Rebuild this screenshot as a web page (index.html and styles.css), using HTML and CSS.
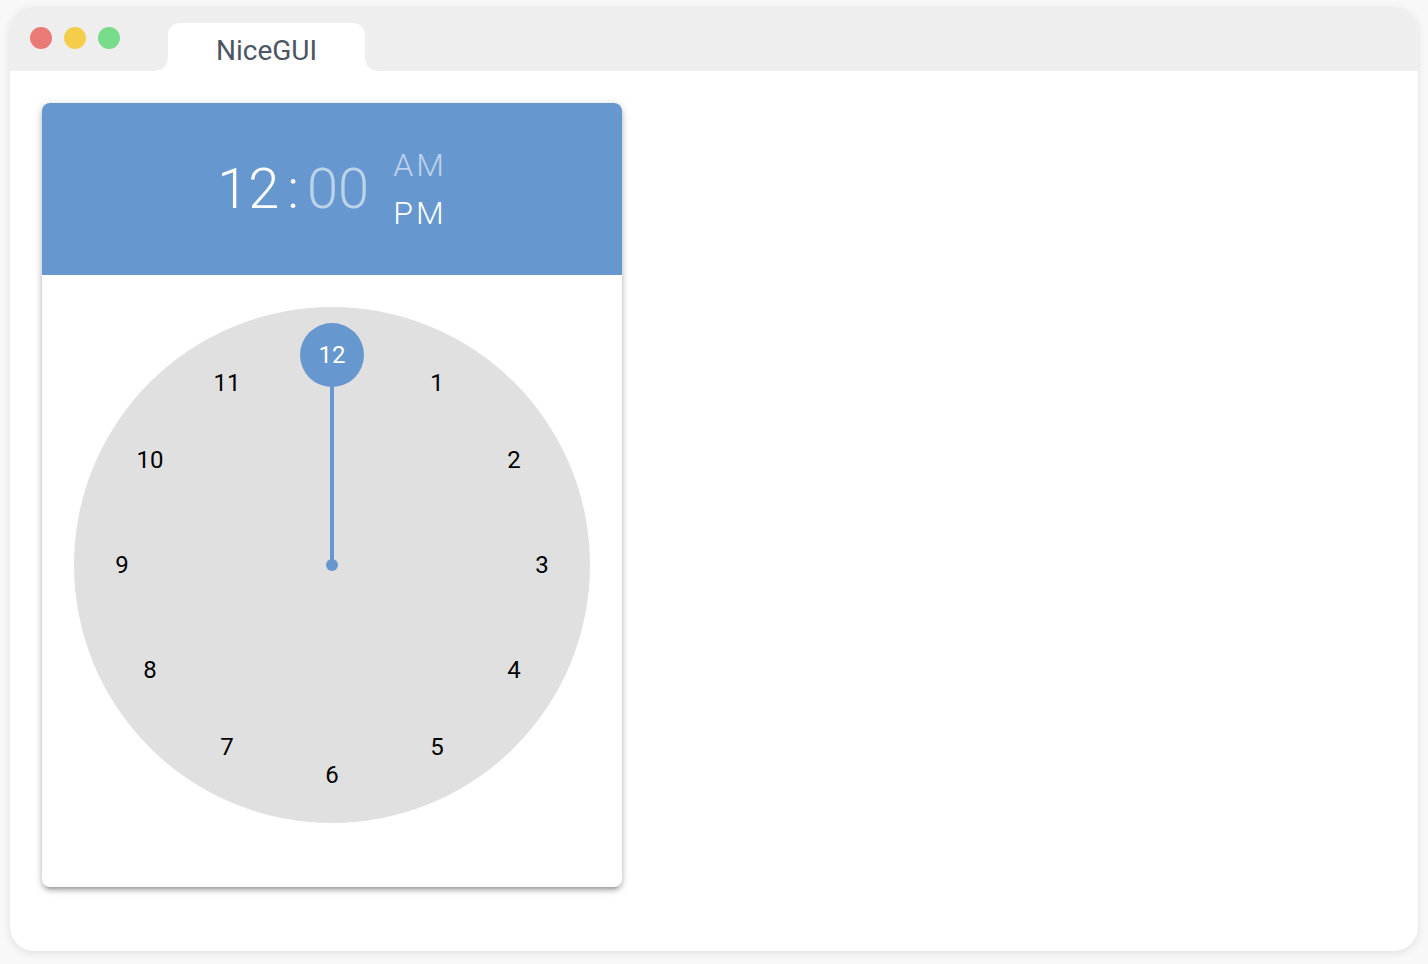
FILE: index.html
```html
<!DOCTYPE html>
<html lang="en">
<head>
<meta charset="utf-8">
<title>NiceGUI</title>
<link rel="stylesheet" href="styles.css">
</head>
<body>
<div class="window">
  <header class="titlebar">
    <div class="lights">
      <span class="light light-red"></span>
      <span class="light light-yellow"></span>
      <span class="light light-green"></span>
    </div>
    <div class="tab">NiceGUI</div>
  </header>
  <main class="content">
    <section class="picker" aria-label="Time picker">
      <div class="picker-header">
        <div class="time">
          <button type="button" class="link active">12</button>
          <span class="colon">:</span>
          <button type="button" class="link">00</button>
        </div>
        <div class="period">
          <button type="button" class="link">AM</button>
          <button type="button" class="link active">PM</button>
        </div>
      </div>
      <div class="picker-body">
        <div class="dial">
          <div class="hand"></div>
          <div class="pivot"></div>
          <button type="button" class="hour selected" style="--angle: 0deg">12</button>
          <button type="button" class="hour" style="--angle: 30deg">1</button>
          <button type="button" class="hour" style="--angle: 60deg">2</button>
          <button type="button" class="hour" style="--angle: 90deg">3</button>
          <button type="button" class="hour" style="--angle: 120deg">4</button>
          <button type="button" class="hour" style="--angle: 150deg">5</button>
          <button type="button" class="hour" style="--angle: 180deg">6</button>
          <button type="button" class="hour" style="--angle: 210deg">7</button>
          <button type="button" class="hour" style="--angle: 240deg">8</button>
          <button type="button" class="hour" style="--angle: 270deg">9</button>
          <button type="button" class="hour" style="--angle: 300deg">10</button>
          <button type="button" class="hour" style="--angle: 330deg">11</button>
        </div>
      </div>
    </section>
  </main>
</div>
</body>
</html>
```
FILE: styles.css
```css
:root {
  --primary: #6697cf;
}

* {
  box-sizing: border-box;
}

body {
  margin: 0;
  min-height: 100vh;
  padding: 7px 10px 13px;
  display: flex;
  background: #f8f8f8;
  font-family: Roboto, "Liberation Sans", sans-serif;
}

button {
  padding: 0;
  border: 0;
  background: none;
  font: inherit;
  color: inherit;
  letter-spacing: inherit;
  cursor: pointer;
}

.window {
  flex: 1;
  border-radius: 24px;
  background: #fff;
  box-shadow: 0 2px 8px rgba(0, 0, 0, 0.1);
}

.titlebar {
  display: flex;
  align-items: flex-end;
  gap: 48px;
  height: 64px;
  padding-left: 20px;
  border-radius: 24px 24px 0 0;
  background: #eee;
}

.lights {
  display: flex;
  align-self: flex-start;
  gap: 12px;
  padding-top: 20px;
}

.light {
  width: 22px;
  height: 22px;
  border-radius: 50%;
}

.light-red {
  background: #e97a75;
}

.light-yellow {
  background: #f4ce4b;
}

.light-green {
  background: #78db8a;
}

.tab {
  position: relative;
  height: 48px;
  padding: 0 48px;
  border-radius: 12px 12px 0 0;
  background: #fff;
  color: #4b5563;
  font-size: 28px;
  line-height: 56px;
}

/* Flared feet on both sides of the tab */
.tab::before,
.tab::after {
  content: "";
  position: absolute;
  bottom: 0;
  width: 12px;
  height: 12px;
}

.tab::before {
  right: 100%;
  background: radial-gradient(circle at 0 0, transparent 11px, #fff 12px);
}

.tab::after {
  left: 100%;
  background: radial-gradient(circle at 100% 0, transparent 11px, #fff 12px);
}

.content {
  padding: 32px;
}

.picker {
  width: 580px;
  max-width: 100%;
  border-radius: 8px;
  background: #fff;
  box-shadow: 0 2px 10px rgba(0, 0, 0, 0.2), 0 4px 4px rgba(0, 0, 0, 0.14), 0 6px 2px -4px rgba(0, 0, 0, 0.12);
}

.picker-header {
  display: flex;
  align-items: center;
  justify-content: center;
  gap: 24px;
  height: 172px;
  border-radius: 8px 8px 0 0;
  background: var(--primary);
  color: #fff;
  font-weight: 300;
}

.link {
  opacity: 0.56;
}

.link.active {
  opacity: 1;
}

.time {
  display: flex;
  gap: 8px;
  font-size: 56px;
  line-height: 56px;
}

.period {
  display: flex;
  flex-direction: column;
  font-size: 32px;
  line-height: 48px;
  letter-spacing: 3px;
}

.picker-body {
  padding: 32px 32px 64px;
}

.dial {
  position: relative;
  aspect-ratio: 1;
  border-radius: 50%;
  background: #e0e0e0;
}

.hand {
  position: absolute;
  left: 50%;
  top: 12%;
  width: 4px;
  height: 38%;
  margin-left: -2px;
  background: var(--primary);
}

.pivot {
  position: absolute;
  left: 50%;
  top: 50%;
  width: 12px;
  height: 12px;
  margin: -6px;
  border-radius: 50%;
  background: var(--primary);
}

.hour {
  position: absolute;
  left: calc(50% + 40.7% * sin(var(--angle)));
  top: calc(50% - 40.7% * cos(var(--angle)));
  width: 64px;
  height: 64px;
  margin: -32px;
  border-radius: 50%;
  color: #000;
  font-size: 24px;
  line-height: 64px;
}

.hour.selected {
  background: var(--primary);
  color: #fff;
}
```
